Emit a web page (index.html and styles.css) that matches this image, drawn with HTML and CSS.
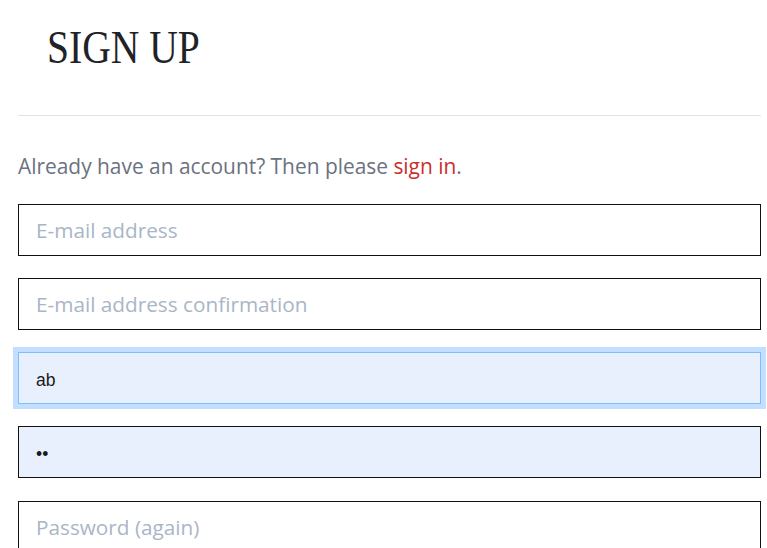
FILE: index.html
```html
<!DOCTYPE html>
<html lang="en">
<head>
<meta charset="utf-8">
<title>Sign up</title>
<link rel="stylesheet" href="styles.css">
</head>
<body>
<main class="page">
  <header class="page-header">
    <h1 class="title">SIGN UP</h1>
  </header>
  <p class="lead">Already have an account? Then please <a class="link" href="#">sign in</a>.</p>
  <form class="form">
    <input class="field" type="email" placeholder="E-mail address">
    <input class="field" type="email" placeholder="E-mail address confirmation">
    <input class="field field-autofill field-focus" type="text" value="ab">
    <input class="field field-autofill field-secret" type="text" value="••">
    <input class="field" type="password" placeholder="Password (again)">
  </form>
</main>
</body>
</html>
```
FILE: styles.css
```css
html, body {
  margin: 0;
  padding: 0;
  background: #ffffff;
}

body {
  font-family: "Open Sans", "Noto Sans", sans-serif;
  overflow: hidden;
}

.page {
  padding: 0 6px 0 18px;
  display: flex;
  flex-direction: column;
}

.page-header {
  border-bottom: 1px solid #e3e3e3;
  padding: 19px 0 0 29px;
  box-sizing: border-box;
  height: 116px;
}

.title {
  margin: 0;
  font-family: "Liberation Serif", "DejaVu Serif", serif;
  font-weight: 400;
  font-size: 46px;
  line-height: 58px;
  color: #1f2327;
  transform: scaleX(0.86);
  transform-origin: left center;
  white-space: nowrap;
}

.lead {
  margin: 36px 0 0 0;
  font-size: 20.9px;
  line-height: 28px;
  color: #6b7280;
}

.link {
  color: #c9302c;
  text-decoration: none;
}

.form {
  display: flex;
  flex-direction: column;
  gap: 22px;
  margin-top: 24px;
}

.field {
  display: block;
  box-sizing: border-box;
  width: 100%;
  height: 52px;
  margin: 0;
  padding: 0 17px;
  border: 1px solid #111111;
  border-radius: 0;
  background: #ffffff;
  font-family: "Open Sans", "Noto Sans", sans-serif;
  font-size: 20.75px;
  color: #333333;
  outline: none;
}

.field:last-child {
  margin-top: 1px;
}

.field::placeholder {
  color: #a9b6c6;
  opacity: 1;
}

.field-autofill {
  background: #e8f0fe;
  font-family: "Liberation Sans", Arial, sans-serif;
  font-size: 17.5px;
  color: #1a1a1a;
  padding-top: 5px;
}

.field-focus {
  border-color: #80bdff;
  box-shadow: 0 0 0 5px #c2dfff;
}

.field-secret {
  font-size: 17.5px;
  letter-spacing: 0;
}
```
